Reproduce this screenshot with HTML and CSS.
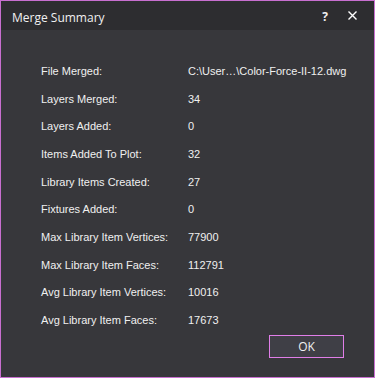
FILE: index.html
```html
<!DOCTYPE html>
<html lang="en">
<head>
    <meta charset="UTF-8">
    <meta name="viewport" content="width=device-width, initial-scale=1.0">
    <title>Merge Summary</title>
    <link rel="stylesheet" href="styles.css">
</head>
<body>
    <div class="dialog">
        <div class="titlebar">
            <span class="title">Merge Summary</span>
            <span class="help">?</span>
            <span class="close">
                <svg width="9" height="9" viewBox="0 0 9 9"><path d="M0.5 0.5 L8.5 8.5 M8.5 0.5 L0.5 8.5" stroke="#fff" stroke-width="1.4"/></svg>
            </span>
        </div>
        <div class="content">
            <div class="rows">
                <span>File Merged:</span><span>C:\User…\Color-Force-II-12.dwg</span>
                <span>Layers Merged:</span><span>34</span>
                <span>Layers Added:</span><span>0</span>
                <span>Items Added To Plot:</span><span>32</span>
                <span>Library Items Created:</span><span>27</span>
                <span>Fixtures Added:</span><span>0</span>
                <span>Max Library Item Vertices:</span><span>77900</span>
                <span>Max Library Item Faces:</span><span>112791</span>
                <span>Avg Library Item Vertices:</span><span>10016</span>
                <span>Avg Library Item Faces:</span><span>17673</span>
            </div>
            <div class="actions">
                <button class="ok">OK</button>
            </div>
        </div>
    </div>
</body>
</html>
```
FILE: styles.css
```css
body {
    margin: 0;
    padding: 0;
    background: #37373b;
}
.dialog {
    width: 375px;
    height: 378px;
    box-sizing: border-box;
    border: 1px solid #c86fd0;
    background: #37373b;
    display: flex;
    flex-direction: column;
}
.titlebar {
    height: 29px;
    background: #2d2d30;
    display: flex;
    align-items: center;
    padding-left: 11px;
    color: #f0f0f0;
    font-family: "Open Sans", sans-serif;
    font-size: 12px;
}
.title {
    flex: 1;
    padding-top: 3px;
}
.help {
    font-weight: bold;
    font-size: 12px;
    margin-right: 20px;
    padding-top: 2px;
}
.close {
    width: 9px;
    height: 9px;
    margin-right: 17px;
    display: flex;
}
.content {
    flex: 1;
    display: flex;
    flex-direction: column;
    font-family: "Liberation Sans", Arial, sans-serif;
    font-size: 11px;
    color: #f0f0f0;
}
.rows {
    display: grid;
    grid-template-columns: 147px auto;
    grid-auto-rows: 27.7px;
    align-items: center;
    padding: 27px 0 0 40px;
}
.actions {
    margin-top: auto;
    display: flex;
    justify-content: flex-end;
    padding: 0 30px 19px 0;
}
.ok {
    width: 75px;
    height: 23px;
    background: #3f3f46;
    border: 1px solid #e07ee8;
    color: #f0f0f0;
    font-family: "Open Sans", sans-serif;
    font-size: 12px;
    padding: 0;
}
```
